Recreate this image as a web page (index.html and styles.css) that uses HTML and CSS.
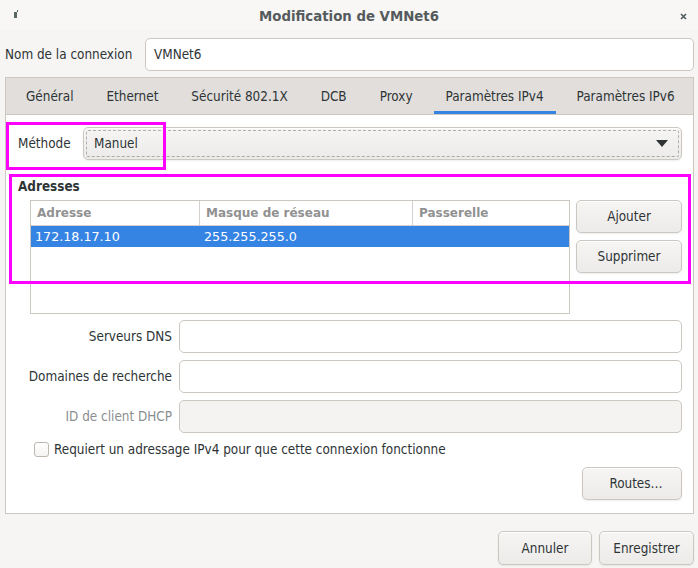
FILE: index.html
```html
<!DOCTYPE html>
<html lang="fr">
<head>
<meta charset="utf-8">
<title>Modification de VMNet6</title>
<link rel="stylesheet" href="styles.css">
</head>
<body>
<div class="window">
  <header class="titlebar">
    <span class="tb-icon"><svg width="4" height="8" viewBox="0 0 4 8"><rect x="0" y="2" width="3" height="6" fill="#5a6566"/><rect x="3" y="0" width="1" height="2" fill="#5a6566"/></svg></span>
    <h1 class="title">Modification de VMNet6</h1>
    <span class="tb-close"><svg width="7" height="7" viewBox="0 0 7 7"><path d="M1 1 L6 6 M6 1 L1 6" stroke="#4f5b5c" stroke-width="1.6"/></svg></span>
  </header>

  <div class="conn-row">
    <label class="conn-label">Nom de la connexion</label>
    <div class="entry conn-entry">VMNet6</div>
  </div>

  <div class="notebook">
    <nav class="tabs">
      <span class="tab">Général</span>
      <span class="tab">Ethernet</span>
      <span class="tab">Sécurité 802.1X</span>
      <span class="tab">DCB</span>
      <span class="tab">Proxy</span>
      <span class="tab active">Paramètres IPv4</span>
      <span class="tab">Paramètres IPv6</span>
    </nav>
    <div class="page">
      <div class="method-row">
        <span class="method-label">Méthode</span>
        <div class="combo">
          <span>Manuel</span>
          <svg class="arrow" width="12" height="7" viewBox="0 0 12 7"><path d="M0 0 H12 L6 7 Z" fill="#2e3436"/></svg>
        </div>
      </div>

      <div class="section-title">Adresses</div>
      <div class="addr-row">
        <div class="table">
          <div class="thead">
            <span class="th c1">Adresse</span>
            <span class="th c2">Masque de réseau</span>
            <span class="th c3">Passerelle</span>
          </div>
          <div class="tr selected">
            <span class="td c1">172.18.17.10</span>
            <span class="td c2">255.255.255.0</span>
            <span class="td c3"></span>
          </div>
        </div>
        <div class="addr-buttons">
          <button class="btn">Ajouter</button>
          <button class="btn">Supprimer</button>
        </div>
      </div>

      <div class="form">
        <label class="form-label">Serveurs DNS</label>
        <div class="entry"></div>
        <label class="form-label">Domaines de recherche</label>
        <div class="entry"></div>
        <label class="form-label disabled">ID de client DHCP</label>
        <div class="entry disabled"></div>
      </div>

      <div class="check-row">
        <span class="checkbox"></span>
        <span>Requiert un adressage IPv4 pour que cette connexion fonctionne</span>
      </div>

      <div class="routes-row">
        <button class="btn routes">Routes…</button>
      </div>
    </div>
  </div>

  <footer class="actions">
    <button class="btn action">Annuler</button>
    <button class="btn action">Enregistrer</button>
  </footer>

  <div class="highlight hl-method"></div>
  <div class="highlight hl-addr"></div>
</div>
</body>
</html>
```

FILE: styles.css
```css
* { box-sizing: border-box; }

html, body {
  margin: 0;
  padding: 0;
}

body {
  width: 698px;
  height: 568px;
  background: #f6f5f4;
  font-family: "DejaVu Sans Condensed", "DejaVu Sans", sans-serif;
  font-stretch: condensed;
  font-size: 13.4px;
  color: #2e3436;
  overflow: hidden;
}

.window {
  position: relative;
  width: 698px;
  height: 568px;
}

.titlebar {
  height: 30px;
  display: flex;
  align-items: center;
  justify-content: space-between;
  padding: 0 11px 0 14px;
  background: #f8f7f6;
}

.tb-icon { display: flex; margin-top: -3px; }
.tb-close { display: flex; margin-top: 2px; }

.title {
  margin: 0;
  font-size: 14.8px;
  font-weight: bold;
  color: #555b5c;
}

.conn-row {
  display: flex;
  align-items: center;
  padding: 8px 4px 0 5px;
}

.conn-label {
  width: 140px;
}

.entry {
  height: 33px;
  flex: 1;
  border: 1px solid #cdc7c2;
  border-radius: 5px;
  background: #ffffff;
  display: flex;
  align-items: center;
  padding: 0 8px;
}

.entry.disabled {
  background: #f4f3f2;
}

.notebook {
  margin: 6px 4px 0 5px;
  height: 437px;
  border: 1px solid #cdc7c2;
  background: #ffffff;
  display: flex;
  flex-direction: column;
}

.tabs {
  height: 37px;
  background: #e1dedb;
  border-bottom: 1px solid #cdc7c2;
  display: flex;
  padding: 0;
  overflow: hidden;
}

.tab {
  flex-shrink: 0;
  white-space: nowrap;
  margin: 0 4.5px;
  padding: 0 12px;
  display: flex;
  align-items: center;
  color: #2e3436;
  border-bottom: 3px solid transparent;
  padding-top: 3px;
}

.tab:first-child { margin-left: 8px; }

.tab.active {
  border-bottom-color: #3584e4;
}

.page {
  flex: 1;
  padding: 12px 11px 0 12px;
  display: flex;
  flex-direction: column;
}

.method-row {
  display: flex;
  align-items: center;
}

.method-label {
  width: 65px;
}

.combo {
  flex: 1;
  height: 33px;
  border: 1px solid #cdc7c2;
  border-radius: 5px;
  background: linear-gradient(to bottom, #f6f5f4, #edebe9);
  box-shadow: inset 0 1px #ffffff, 0 1px 2px rgba(0,0,0,0.07);
  display: flex;
  align-items: center;
  justify-content: space-between;
  padding: 0 13px 0 10px;
  outline: 1px dashed rgba(46,52,54,0.35);
  outline-offset: -4px;
}

.section-title {
  font-weight: bold;
  margin-top: 18px;
  line-height: 17px;
}

.addr-row {
  display: flex;
  gap: 6px;
  margin-top: 5px;
  padding-left: 12px;
}

.table {
  width: 540px;
  height: 114px;
  border: 1px solid #cdc7c2;
  background: #ffffff;
  font-family: "DejaVu Sans", sans-serif;
  font-stretch: normal;
  font-size: 12.7px;
}

.thead {
  display: flex;
  height: 25px;
  border-bottom: 1px solid #d5d0cc;
}

.th {
  display: flex;
  align-items: center;
  padding-left: 6px;
  font-weight: bold;
  color: #919191;
  font-size: 12px;
}

.th + .th { border-left: 1px solid #d5d0cc; }

.c1 { width: 168px; }
.c2 { width: 213px; }
.c3 { flex: 1; }

.tr {
  display: flex;
  height: 21px;
}

.tr.selected {
  background: #3584e4;
  color: #ffffff;
}

.td {
  display: flex;
  align-items: center;
  padding-left: 4px;
}

.td.c2 { padding-left: 5px; }

.addr-buttons {
  display: flex;
  flex-direction: column;
  gap: 7px;
  width: 106px;
}

.btn {
  font: inherit;
  color: #2e3436;
  height: 33px;
  border: 1px solid #cdc7c2;
  border-radius: 5px;
  background: linear-gradient(to bottom, #f6f5f4, #edebe9);
  box-shadow: inset 0 1px #ffffff, 0 1px 2px rgba(0,0,0,0.07);
  padding: 0;
}

.form {
  display: grid;
  grid-template-columns: 154px 1fr;
  column-gap: 7px;
  row-gap: 7px;
  align-items: center;
  margin-top: 6px;
}

.form-label {
  text-align: right;
}

.form-label.disabled {
  color: #8b8e8f;
}

.check-row {
  display: flex;
  align-items: center;
  gap: 5px;
  margin-top: 9px;
  padding-left: 16px;
}

.checkbox {
  width: 15px;
  height: 15px;
  border: 1px solid #bfb8b1;
  border-radius: 3px;
  background: linear-gradient(to bottom, #ffffff, #f4f3f2);
}

.routes-row {
  display: flex;
  justify-content: flex-end;
  margin-top: 10px;
}

.btn.routes {
  width: 100px;
  text-align: center;
  padding-left: 8px;
}

.actions {
  display: flex;
  justify-content: flex-end;
  gap: 7px;
  padding: 17px 4px 0 0;
}

.btn.action {
  height: 34px;
}

.btn.action:first-child { width: 94px; }
.btn.action:last-child { width: 95px; }

.highlight {
  position: absolute;
  border: 3px solid #ff00ff;
  pointer-events: none;
}

.hl-method {
  left: 6px;
  top: 122px;
  width: 160px;
  height: 48px;
}

.hl-addr {
  left: 9px;
  top: 174px;
  width: 682px;
  height: 110px;
}
```
